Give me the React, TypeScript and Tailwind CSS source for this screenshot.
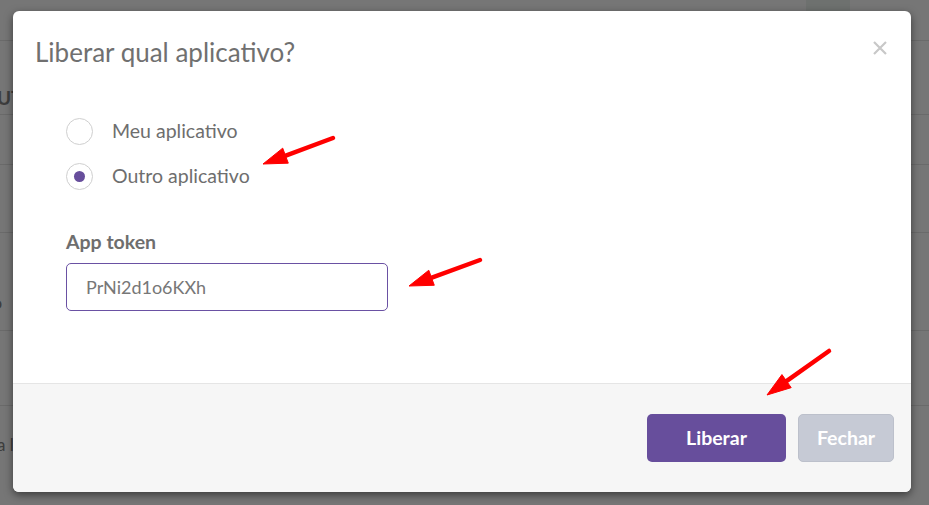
import React from 'react';

type Pt = [number, number];

const arrows: { tail: Pt; tip: Pt }[] = [
  { tail: [333, 138], tip: [263, 164] },
  { tail: [480, 260], tip: [409, 286] },
  { tail: [829, 351], tip: [767, 395] },
];

const arrowHead = (tail: Pt, tip: Pt) => {
  const dx = tip[0] - tail[0];
  const dy = tip[1] - tail[1];
  const len = Math.hypot(dx, dy);
  const ux = dx / len;
  const uy = dy / len;
  const bx = tip[0] - ux * 24;
  const by = tip[1] - uy * 24;
  const px = -uy * 8;
  const py = ux * 8;
  return {
    base: [bx + ux * 4, by + uy * 4] as Pt,
    points: `${tip[0]},${tip[1]} ${bx + px},${by + py} ${bx - px},${by - py}`,
  };
};

const Radio = ({ checked, label }: { checked?: boolean; label: string }) => (
  <label className="flex items-center h-[26px]">
    <span className="w-[27px] h-[27px] rounded-full border border-[#cfcfcf] bg-white flex items-center justify-center">
      {checked && <span className="w-[11px] h-[11px] rounded-full bg-[#674e9c]" />}
    </span>
    <span className="ml-[19px] text-[19.5px] text-[#6e6e6e]">{label}</span>
  </label>
);

const BackgroundPage = () => (
  <div className="flex flex-col h-full">
    <div className="h-[40px] flex justify-end">
      <div className="w-[44px] mr-[79px] bg-[#6e716f]" />
    </div>
    <div className="h-[28px] border-t border-[#6a6a6a]" />
    <div className="h-[47px] border-b border-[#6a6a6a] flex items-end pb-[2px]">
      <span className="text-[19px] font-bold text-[#3d3d3d] -ml-[3px]">UT</span>
    </div>
    <div className="h-[50px] border-b border-[#6a6a6a]" />
    <div className="h-[68px] border-b border-[#6a6a6a]" />
    <div className="h-[98px] border-b border-[#6a6a6a] flex items-end pb-[14px]">
      <span className="text-[18px] text-[#3d3d3d] -ml-[8px]">o</span>
    </div>
    <div className="h-[75px] border-b border-[#6a6a6a]" />
    <div className="flex-1 flex items-start pt-[26px]">
      <span className="text-[17px] text-[#3d3d3d] -ml-[3px]">a l</span>
    </div>
  </div>
);

export default function App() {
  return (
    <div
      className="relative w-[929px] h-[505px] overflow-hidden bg-[#767676]"
      style={{ fontFamily: 'Lato, "Open Sans", sans-serif' }}
    >
      <BackgroundPage />

      {/* Modal */}
      <div className="absolute inset-0 pl-[13px] pt-[11px]">
        <div className="w-[898px] h-[481px] bg-white rounded-[6px] shadow-[0_3px_9px_rgba(0,0,0,0.5)] overflow-hidden flex flex-col">
          <div className="h-[373px] border-b border-[#e5e5e5] flex flex-col">
            <div className="flex items-start justify-between pl-[22px] pr-[24px] pt-[26px]">
              <h2 className="text-[26px] leading-[30px] text-[#707070]">Liberar qual aplicativo?</h2>
              <button className="mt-[4px] text-[#c8c8c8]">
                <svg width="14" height="14" viewBox="0 0 14 14">
                  <path d="M1 1L13 13M13 1L1 13" stroke="currentColor" strokeWidth="2.2" />
                </svg>
              </button>
            </div>
            <div className="pl-[53px] pt-[51px] flex flex-col">
              <Radio label="Meu aplicativo" />
              <div className="h-[19px]" />
              <Radio checked label="Outro aplicativo" />
              <div className="mt-[42px] text-[19.5px] font-bold text-[#6e6e6e] leading-[22px]">App token</div>
              <div className="mt-[10px] w-[322px] h-[48px] border border-[#6a51a3] rounded-[5px] flex items-center pl-[19px]">
                <span className="text-[18px] text-[#777]">PrNi2d1o6KXh</span>
              </div>
            </div>
          </div>
          <div className="flex-1 bg-[#f6f6f6] flex justify-end items-start pt-[30px] pr-[17px] gap-[12px]">
            <button className="w-[139px] h-[48px] rounded-[5px] bg-[#674e9c] text-white text-[19.5px] font-bold">
              Liberar
            </button>
            <button className="w-[96px] h-[48px] rounded-[5px] bg-[#c6cad5] border border-[#bcc0cb] text-white text-[19.5px] font-bold">
              Fechar
            </button>
          </div>
        </div>
      </div>

      {/* Annotation arrows */}
      <svg className="absolute inset-0 pointer-events-none" width="929" height="505">
        {arrows.map((a, i) => {
          const h = arrowHead(a.tail, a.tip);
          return (
            <g key={i} fill="#ff0000" stroke="#ff0000">
              <line
                x1={a.tail[0]}
                y1={a.tail[1]}
                x2={h.base[0]}
                y2={h.base[1]}
                strokeWidth="4.5"
                strokeLinecap="round"
              />
              <polygon points={h.points} strokeWidth="1" strokeLinejoin="round" />
            </g>
          );
        })}
      </svg>
    </div>
  );
}
